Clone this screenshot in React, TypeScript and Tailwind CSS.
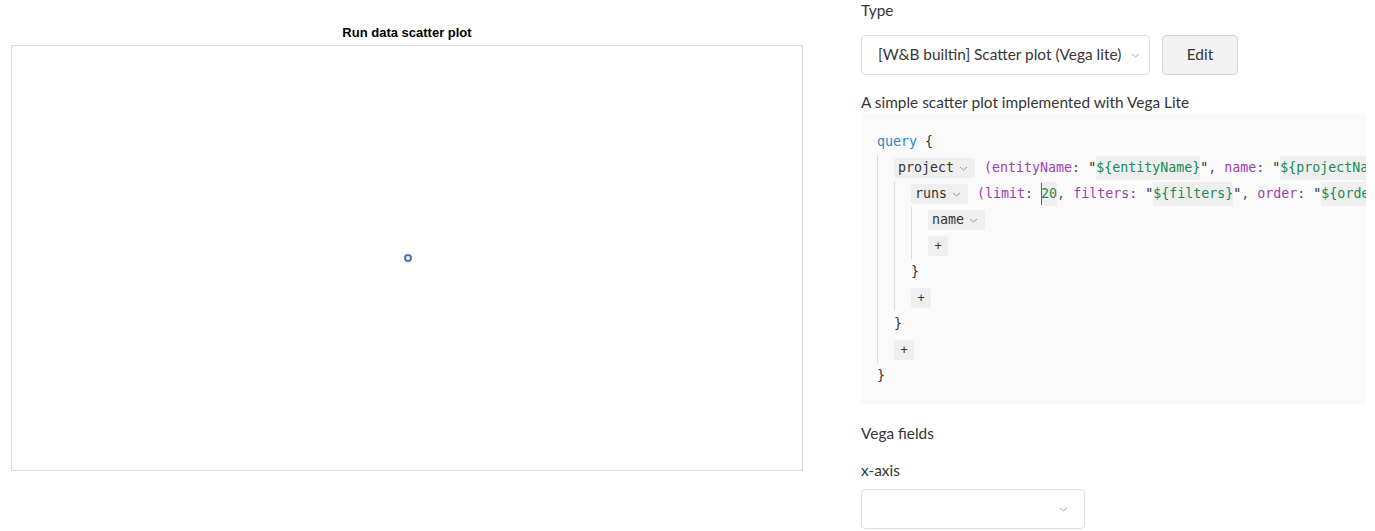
import { ReactNode } from "react";

const SANS = { fontFamily: "Lato, 'Noto Sans', sans-serif" };
const MONO = { fontFamily: "'DejaVu Sans Mono', 'Liberation Mono', monospace" };

function Chevron({ className = "" }: { className?: string }) {
  return (
    <svg width="9" height="5" viewBox="0 0 9 5" className={className}>
      <path d="M1 1l3.5 3 3.5-3" fill="none" stroke="currentColor" strokeWidth="1" />
    </svg>
  );
}

// a code line, 26px tall
function Line({ children }: { children: ReactNode }) {
  return <div className="h-[26px] flex items-center whitespace-nowrap">{children}</div>;
}

function Field({ name }: { name: string }) {
  return (
    <span className="h-[20px] inline-flex items-center gap-[5px] bg-[#efefef] rounded-[2px] pl-[4px] pr-[7px] text-[#333]">
      {name}
      <Chevron className="text-[#999] mt-[1px]" />
    </span>
  );
}

function Plus() {
  return (
    <span className="h-[20px] w-[20px] inline-flex items-center justify-center bg-[#efefef] rounded-[2px] text-[#333] text-[12px]">
      +
    </span>
  );
}

function Str({ children }: { children: ReactNode }) {
  return <span className="bg-[#efefef] text-[#1b8a55] py-[2px]">{children}</span>;
}

function Block({ children }: { children: ReactNode }) {
  return <div className="border-l border-[#dcdcdc] pl-[16px]">{children}</div>;
}

const K = "text-[#9a3fb0]";
const P = "text-[#555]";

export default function App() {
  return (
    <div className="flex bg-white w-[1375px] h-[531px] overflow-hidden text-[#363636]">
      {/* chart */}
      <div className="w-[792px] ml-[11px] mt-[25px] shrink-0">
        <div
          className="text-center text-[13px] font-bold text-black h-[20px] leading-[16px]"
          style={{ fontFamily: "'Liberation Sans', Arial, sans-serif" }}
        >
          Run data scatter plot
        </div>
        <div className="h-[426px] border border-[#dadada] flex items-center justify-center">
          <div className="w-[8px] h-[8px] rounded-full border-2 border-[#4c78a8] ml-[1px]" />
        </div>
      </div>

      {/* config panel */}
      <div className="w-[505px] ml-[58px] shrink-0 text-[15.4px]" style={SANS}>
        <div className="leading-[20px]">Type</div>
        <div className="flex gap-[12px] mt-[15px]">
          <div className="w-[289px] h-[40px] border border-[#dedede] rounded-[4px] flex items-center pl-[16px] gap-[10px]">
            <span>[W&amp;B builtin] Scatter plot (Vega lite)</span>
            <Chevron className="text-[#aaa]" />
          </div>
          <button className="w-[76px] h-[40px] border border-[#d4d4d4] rounded-[4px] bg-[#f2f2f2] text-[#363636]">
            Edit
          </button>
        </div>
        <div className="mt-[17px] leading-[20px]">A simple scatter plot implemented with Vega Lite</div>

        <div
          className="mt-[1px] h-[291px] bg-[#fafafa] pt-[16px] pl-[16px] overflow-hidden text-[13.3px] text-[#333]"
          style={MONO}
        >
          <Line>
            <span className="text-[#2a8ac0]">query</span>
            <span>&nbsp;{"{"}</span>
          </Line>
          <Block>
            <Line>
              <Field name="project" />
              <span className={`ml-[9px] ${K}`}>(entityName</span>
              <span className={P}>:&nbsp;</span>"<Str>{"${entityName}"}</Str>"<span className={P}>,&nbsp;</span>
              <span className={K}>name</span>
              <span className={P}>:&nbsp;</span>"<Str>{"${projectName}"}</Str>"
            </Line>
            <Block>
              <Line>
                <Field name="runs" />
                <span className={`ml-[9px] ${K}`}>(limit</span>
                <span className={P}>:&nbsp;</span>
                <span className="relative bg-[#efefef] text-[#1b8a55] py-[2px]">
                  <span className="absolute left-0 top-[1px] bottom-[1px] w-[1px] bg-[#1b8a55]" />
                  20
                </span>
                <span className={P}>,&nbsp;</span>
                <span className={K}>filters</span>
                <span className={P}>:&nbsp;</span>"<Str>{"${filters}"}</Str>"<span className={P}>,&nbsp;</span>
                <span className={K}>order</span>
                <span className={P}>:&nbsp;</span>"<Str>{"${order}"}</Str>"
              </Line>
              <Block>
                <Line>
                  <Field name="name" />
                </Line>
                <Line>
                  <Plus />
                </Line>
              </Block>
              <Line>{"}"}</Line>
              <Line>
                <Plus />
              </Line>
            </Block>
            <Line>{"}"}</Line>
            <Line>
              <Plus />
            </Line>
          </Block>
          <Line>{"}"}</Line>
        </div>

        <div className="mt-[19px] leading-[20px]">Vega fields</div>
        <div className="mt-[17px] leading-[20px]">x-axis</div>
        <div className="mt-[9px] w-[224px] h-[40px] border border-[#dedede] rounded-[4px] flex items-center justify-end pr-[16px]">
          <Chevron className="text-[#aaa]" />
        </div>
      </div>
    </div>
  );
}
